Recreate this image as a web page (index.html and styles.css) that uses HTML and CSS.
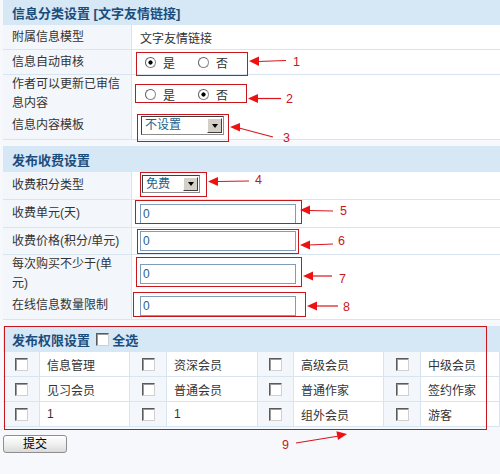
FILE: index.html
```html
<!DOCTYPE html>
<html lang="zh-CN">
<head>
<meta charset="utf-8">
<title>信息分类设置</title>
<link rel="stylesheet" href="styles.css">
</head>
<body>
<div class="page">
  <section class="panel">
    <div class="head">信息分类设置 [文字友情链接]</div>
    <div class="row h25"><div class="label">附属信息模型</div><div class="value">文字友情链接</div></div>
    <div class="row h25"><div class="label">信息自动审核</div>
      <div class="value"><div class="radios">
        <label class="opt"><input type="radio" name="auto" checked>是</label>
        <label class="opt"><input type="radio" name="auto">否</label>
      </div></div></div>
    <div class="row h37"><div class="label">作者可以更新已审信息内容</div>
      <div class="value"><div class="radios">
        <label class="opt"><input type="radio" name="upd">是</label>
        <label class="opt"><input type="radio" name="upd" checked>否</label>
      </div></div></div>
    <div class="row h28"><div class="label">信息内容模板</div>
      <div class="value"><div class="select sel-tpl"><span class="txt">不设置</span><span class="btn"><span class="tri"></span></span></div></div></div>
  </section>

  <section class="panel gap">
    <div class="head">发布收费设置</div>
    <div class="row h28"><div class="label">收费积分类型</div>
      <div class="value"><div class="select sel-fee"><span class="txt">免费</span><span class="btn"><span class="tri"></span></span></div></div></div>
    <div class="row h28"><div class="label">收费单元(天)</div><div class="value"><input class="text" type="text" value="0"></div></div>
    <div class="row h27"><div class="label">收费价格(积分/单元)</div><div class="value"><input class="text" type="text" value="0"></div></div>
    <div class="row h37"><div class="label">每次购买不少于(单元)</div><div class="value"><input class="text" type="text" value="0"></div></div>
    <div class="row h28"><div class="label">在线信息数量限制</div><div class="value"><input class="text" type="text" value="0"></div></div>
  </section>

  <section class="panel gap">
    <div class="head">发布权限设置 <input class="check head-check" type="checkbox"> 全选</div>
    <div class="perm-row">
      <div class="cb"><input class="check" type="checkbox"></div><div class="lab">信息管理</div>
      <div class="cb"><input class="check" type="checkbox"></div><div class="lab">资深会员</div>
      <div class="cb"><input class="check" type="checkbox"></div><div class="lab">高级会员</div>
      <div class="cb"><input class="check" type="checkbox"></div><div class="lab">中级会员</div>
    </div>
    <div class="perm-row">
      <div class="cb"><input class="check" type="checkbox"></div><div class="lab">见习会员</div>
      <div class="cb"><input class="check" type="checkbox"></div><div class="lab">普通会员</div>
      <div class="cb"><input class="check" type="checkbox"></div><div class="lab">普通作家</div>
      <div class="cb"><input class="check" type="checkbox"></div><div class="lab">签约作家</div>
    </div>
    <div class="perm-row">
      <div class="cb"><input class="check" type="checkbox"></div><div class="lab">1</div>
      <div class="cb"><input class="check" type="checkbox"></div><div class="lab">1</div>
      <div class="cb"><input class="check" type="checkbox"></div><div class="lab">组外会员</div>
      <div class="cb"><input class="check" type="checkbox"></div><div class="lab">游客</div>
    </div>
  </section>

  <button class="submit" type="button">提交</button>

  <svg class="notes" width="500" height="474" viewBox="0 0 500 474">
    <g class="boxes">
      <rect x="136.5" y="52.5" width="111" height="23"/>
      <rect x="135.5" y="84.5" width="111" height="18"/>
      <rect x="137.5" y="114.5" width="91" height="27"/>
      <rect x="140.5" y="172.5" width="66" height="24"/>
      <rect x="135.5" y="200.5" width="166" height="23"/>
      <rect x="137.5" y="229.5" width="161" height="24"/>
      <rect x="136.5" y="257.5" width="165" height="29"/>
      <rect x="133.5" y="292.5" width="172" height="24"/>
      <rect x="4.5" y="326.5" width="482" height="103"/>
    </g>
    <g class="arrows">
      <line x1="258" y1="61.5" x2="286" y2="60.5"/><polygon points="249,61 259,56.5 259,66"/>
      <line x1="257" y1="98.5" x2="281" y2="98.5"/><polygon points="248,98.5 258,94 258,103"/>
      <line x1="239" y1="128" x2="273" y2="137"/><polygon points="230,127 240,123 240,131.5"/>
      <line x1="217" y1="181.5" x2="249" y2="181"/><polygon points="208,181.5 218,177 218,186"/>
      <line x1="309" y1="210.5" x2="333" y2="211"/><polygon points="300,210 310,205.5 310,214.5"/>
      <line x1="309" y1="245" x2="333" y2="244"/><polygon points="300,245 310,240.5 310,249.5"/>
      <line x1="312" y1="276" x2="332" y2="276"/><polygon points="303,276 313,271.5 313,280.5"/>
      <line x1="316" y1="306" x2="338" y2="306"/><polygon points="307,306 317,301.5 317,310.5"/>
      <line x1="296" y1="443" x2="339" y2="436"/><polygon points="347,434 338,440.1 336.4,431.3"/>
    </g>
    <g class="nums">
      <text x="293" y="66">1</text>
      <text x="286" y="103">2</text>
      <text x="283" y="142">3</text>
      <text x="255" y="184">4</text>
      <text x="340" y="215">5</text>
      <text x="338" y="245">6</text>
      <text x="339" y="283">7</text>
      <text x="343" y="311">8</text>
      <text x="282" y="449">9</text>
    </g>
  </svg>
</div>
</body>
</html>
```

FILE: styles.css
```css
html, body {
  margin: 0;
  padding: 0;
  background: #f7f8fc;
}

body {
  font-family: "Liberation Sans", "Noto Sans CJK SC", sans-serif;
  font-size: 12px;
  color: #333;
}

.page {
  position: relative;
  width: 500px;
  height: 474px;
  padding-left: 3px;
  box-sizing: border-box;
  overflow: hidden;
}

.panel {
  width: 497px;
}

.panel.gap {
  margin-top: 6px;
}

.head {
  height: 25px;
  background: #d6e7f6;
  color: #1a4d7c;
  font-weight: bold;
  font-size: 13px;
  display: flex;
  align-items: center;
  padding-left: 9px;
  white-space: pre;
}

.panel.gap .head {
  height: 26px;
}

.row {
  display: grid;
  grid-template-columns: 129px 1fr;
  box-sizing: border-box;
  border-bottom: 1px solid #d8e5f1;
}

.h25 { height: 25px; }
.h27 { height: 27px; }
.h28 { height: 28px; }
.h37 { height: 37px; }

.label {
  background: #f3f6fa;
  border-right: 1px solid #d8e5f1;
  padding: 0 5px 0 9px;
  display: flex;
  align-items: center;
  line-height: 19px;
}

.value {
  background: #fff;
  display: flex;
  align-items: center;
  padding-left: 8px;
}

.radios {
  display: flex;
  margin-left: 5px;
}

.opt {
  display: flex;
  align-items: center;
  gap: 7px;
}

.opt + .opt {
  margin-left: 23px;
}

.opt input {
  appearance: none;
  -webkit-appearance: none;
  width: 11px;
  height: 11px;
  margin: 0;
  border: 1px solid #8a8a8a;
  border-top-color: #5e5e5e;
  border-left-color: #5e5e5e;
  border-radius: 50%;
  background: #fff;
}

.opt input:checked {
  background: radial-gradient(circle, #000 0 1.8px, #fff 2.4px);
}

.select {
  display: flex;
  height: 19px;
  box-sizing: border-box;
  border: 1px solid #8c8c8c;
  border-top-color: #3c3c3c;
  border-left-color: #3c3c3c;
  background: #fff;
}

.sel-tpl {
  width: 83px;
  margin-left: 1px;
}

.sel-fee {
  width: 58px;
  height: 18px;
  margin-left: 2px;
  margin-top: -3px;
}

.select .txt {
  flex: 1;
  padding-left: 3px;
  color: #1e5f8c;
  line-height: 17px;
}

.sel-fee .txt {
  line-height: 16px;
}

.select .btn {
  width: 15px;
  margin: 1px;
  box-sizing: border-box;
  background: #d4d0c8;
  border: 1px solid;
  border-color: #fff #404040 #404040 #fff;
  display: flex;
  align-items: center;
  justify-content: center;
}

.tri {
  width: 0;
  height: 0;
  border-left: 3.5px solid transparent;
  border-right: 3.5px solid transparent;
  border-top: 4px solid #000;
}

.text {
  width: 156px;
  height: 20px;
  box-sizing: border-box;
  margin: 0 0 0 0;
  border: 1px solid #7f9db9;
  padding: 0 2px;
  background: #fff;
  font-family: inherit;
  font-size: 12px;
  color: #1e5f8c;
  outline: none;
}

.check {
  appearance: none;
  -webkit-appearance: none;
  width: 13px;
  height: 13px;
  margin: 0;
  box-sizing: border-box;
  border: 1px solid;
  border-color: #5a5a5a #d0d0d0 #d0d0d0 #5a5a5a;
  box-shadow: inset 1px 1px 0 #9a9a9a;
  background: #fff;
}

.head-check {
  margin: 0 0 0 2px;
}

.perm-row {
  display: grid;
  grid-template-columns: 37px 90px 37px 91px 36px 90px 37px 1fr;
  height: 25px;
  box-sizing: border-box;
  border-bottom: 1px solid #d8e5f1;
}

.cb {
  background: #f3f6fa;
  border-right: 1px solid #d8e5f1;
  display: flex;
  align-items: center;
  justify-content: center;
}

.lab {
  background: #fff;
  border-right: 1px solid #d8e5f1;
  display: flex;
  align-items: center;
  padding-left: 7px;
}

.submit {
  display: block;
  margin-top: 8px;
  width: 64px;
  height: 18px;
  padding: 0;
  border: 1px solid #8e8e8e;
  border-radius: 3px;
  background: linear-gradient(#ffffff, #eeeeee 55%, #dadada);
  font-family: inherit;
  font-size: 12px;
  color: #000;
  line-height: 16px;
}

.notes {
  position: absolute;
  left: 0;
  top: 0;
  pointer-events: none;
}

.boxes rect {
  fill: none;
  stroke: #c8161d;
  stroke-width: 1;
}

.arrows line {
  stroke: #d9141b;
  stroke-width: 1.2;
}

.arrows polygon {
  fill: #ee1111;
}

.nums text {
  fill: #c8161d;
  font-family: "Liberation Sans", sans-serif;
  font-size: 12.5px;
}
```
